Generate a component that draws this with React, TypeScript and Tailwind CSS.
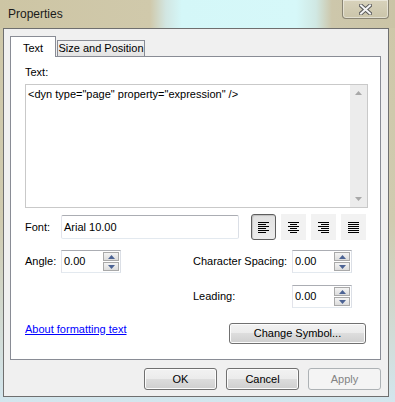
import React from "react";

const btn =
  "flex items-center justify-center rounded-[3px] border border-[#707070] bg-[linear-gradient(180deg,#f2f2f2_0%,#ebebeb_50%,#dddddd_50%,#cfcfcf_100%)] shadow-[inset_0_0_0_1px_#fcfcfc] text-[11px] text-black";

function AlignIcon({ widths, align }: { widths: number[]; align: "l" | "c" | "r" }) {
  return (
    <svg width="11" height="11" viewBox="0 0 11 11" shapeRendering="crispEdges">
      {widths.map((w, i) => {
        const x = align === "l" ? 0 : align === "r" ? 11 - w : (11 - w) / 2;
        return <rect key={i} x={Math.round(x)} y={i * 2} width={w} height={1} fill="#000" />;
      })}
    </svg>
  );
}

function Spin({ value }: { value: string }) {
  return (
    <div className="flex h-[23px] w-[60px] items-stretch border border-[#abadb3] border-r-[#dbdfe6] border-b-[#e3e9ef] border-l-[#e2e3ea] bg-white">
      <div className="flex flex-1 items-center pl-[2px] text-[11px] text-black">{value}</div>
      <div className="flex flex-col justify-center gap-[1px] pr-[1px]">
        <div className="flex h-[9px] w-[16px] items-center justify-center border border-[#a9a9a9] bg-[linear-gradient(180deg,#f4f4f4,#dcdcdc)]">
          <svg width="7" height="4" viewBox="0 0 7 4">
            <path d="M0 4 L3.5 0 L7 4 Z" fill="#4c6394" />
          </svg>
        </div>
        <div className="flex h-[9px] w-[16px] items-center justify-center border border-[#a9a9a9] bg-[linear-gradient(180deg,#f4f4f4,#dcdcdc)]">
          <svg width="7" height="4" viewBox="0 0 7 4">
            <path d="M0 0 L3.5 4 L7 0 Z" fill="#4c6394" />
          </svg>
        </div>
      </div>
    </div>
  );
}

export default function App() {
  return (
    <div className="h-[402px] w-[395px] overflow-hidden bg-[linear-gradient(180deg,#cec7a8_0%,#d0cbb0_55%,#d3e6ee_100%)] font-['Liberation_Sans',Arial,sans-serif] text-black">
      {/* Title bar */}
      <div className="flex h-[28px] items-start bg-[linear-gradient(90deg,#cdc5a4_0%,#d0c9ab_38%,#d2e6e2_42%,#d4f7f8_46%,#d6f8f9_75%,#d0e8e3_80%,#cdc7ab_84%,#cbc4a6_100%)]">
        <div className="flex h-[28px] flex-1 items-center pl-[8px] text-[12px] text-[#1a1a1a]">Properties</div>
        <div className="mr-[6px] flex h-[19px] w-[47px] items-center justify-center rounded-b-[4px] border border-t-0 border-[#8a8574] bg-[linear-gradient(180deg,#d8d2bb,#cbc5aa)] shadow-[inset_0_0_0_1px_rgba(255,255,255,0.45)]">
          <svg width="13" height="11" viewBox="0 0 13 11">
            <path d="M2 1.5 L11 9.5 M11 1.5 L2 9.5" stroke="#5a5a5a" strokeWidth="4" strokeLinecap="square" />
            <path d="M2 1.5 L11 9.5 M11 1.5 L2 9.5" stroke="#f4f4f4" strokeWidth="2" strokeLinecap="square" />
          </svg>
        </div>
      </div>

      {/* Client area */}
      <div className="ml-[3px] flex h-[369px] w-[386px] flex-col border border-[#6f6f6f] bg-[#f0f0f0] pb-[6px] pl-[6px] pr-[7px] pt-[7px]">
        {/* Tabs */}
        <div className="relative z-10 flex h-[20px] items-end">
          <div className="-mb-px flex h-[21px] w-[46px] items-start justify-center border border-b-0 border-[#898c95] bg-white pt-[3px] text-[11px]">
            Text
          </div>
          <div className="ml-px flex h-[16px] w-[88px] items-center justify-center border border-b-0 border-[#898c95] bg-[linear-gradient(180deg,#f3f3f3,#e3e3e3)] text-[11px]">
            Size and Position
          </div>
        </div>

        {/* Panel */}
        <div className="flex h-[304px] w-[371px] flex-col border border-[#898c95] bg-white pl-[14px] pr-[12px] pt-[9px]">
          <div className="h-[13px] text-[11px] leading-[13px]">Text:</div>
          <div className="mt-[5px] flex h-[124px] border border-[#c9c9c9] bg-white">
            <div className="flex-1 pl-[2px] pt-[3px] text-[11px] leading-[13px]">
              {'<dyn type="page" property="expression" />'}
            </div>
            <div className="flex w-[17px] flex-col items-center justify-between bg-[#ececec] py-[6px]">
              <svg width="7" height="4" viewBox="0 0 7 4">
                <path d="M0 4 L3.5 0 L7 4 Z" fill="#a8a8a8" />
              </svg>
              <svg width="7" height="4" viewBox="0 0 7 4">
                <path d="M0 0 L3.5 4 L7 0 Z" fill="#a8a8a8" />
              </svg>
            </div>
          </div>

          {/* Font row */}
          <div className="mt-[6px] flex h-[26px] items-center">
            <div className="w-[36px] text-[11px]">Font:</div>
            <div className="flex h-[24px] w-[178px] items-center rounded-[2px] border border-[#abadb3] border-b-[#e3e9ef] border-l-[#e2e3ea] border-r-[#dbdfe6] pl-[2px] text-[11px]">
              Arial 10.00
            </div>
            <div className="ml-[12px] flex gap-[5px]">
              <div className="flex h-[26px] w-[25px] items-center justify-center rounded-[3px] border border-[#5e5e5e] bg-[linear-gradient(180deg,#e2e2e2,#ececec)] shadow-[inset_1px_1px_1px_rgba(0,0,0,0.15)]">
                <AlignIcon widths={[11, 8, 11, 8, 11, 8]} align="l" />
              </div>
              <div className="flex h-[26px] w-[25px] items-center justify-center bg-[#f2f2f2]">
                <AlignIcon widths={[11, 7, 11, 7, 11, 7]} align="c" />
              </div>
              <div className="flex h-[26px] w-[25px] items-center justify-center bg-[#f2f2f2]">
                <AlignIcon widths={[11, 8, 11, 8, 11, 8]} align="r" />
              </div>
              <div className="flex h-[26px] w-[25px] items-center justify-center bg-[#f2f2f2]">
                <AlignIcon widths={[11, 11, 11, 11, 11, 11]} align="l" />
              </div>
            </div>
          </div>

          {/* Angle / Character spacing */}
          <div className="mt-[10px] flex items-center">
            <div className="flex w-[168px] items-center">
              <div className="w-[36px] text-[11px]">Angle:</div>
              <Spin value="0.00" />
            </div>
            <div className="w-[99px] text-[11px]">Character Spacing:</div>
            <Spin value="0.00" />
          </div>

          {/* Leading */}
          <div className="mt-[12px] flex items-center pl-[168px]">
            <div className="w-[99px] text-[11px]">Leading:</div>
            <Spin value="0.00" />
          </div>

          {/* Link row */}
          <div className="mt-[15px] flex items-start justify-between pr-[2px]">
            <a href="#" className="text-[11px] leading-[13px] text-[#0000ff] underline">
              About formatting text
            </a>
            <button className={`${btn} h-[21px] w-[137px]`}>Change Symbol...</button>
          </div>
        </div>

        {/* Bottom buttons */}
        <div className="mt-[8px] flex justify-end gap-[9px]">
          <button className={`${btn} h-[22px] w-[73px]`}>OK</button>
          <button className={`${btn} h-[22px] w-[73px]`}>Cancel</button>
          <button className="flex h-[22px] w-[73px] items-center justify-center rounded-[3px] border border-[#adb2b5] bg-[#f4f4f4] text-[11px] text-[#838383]">
            Apply
          </button>
        </div>
      </div>
    </div>
  );
}
